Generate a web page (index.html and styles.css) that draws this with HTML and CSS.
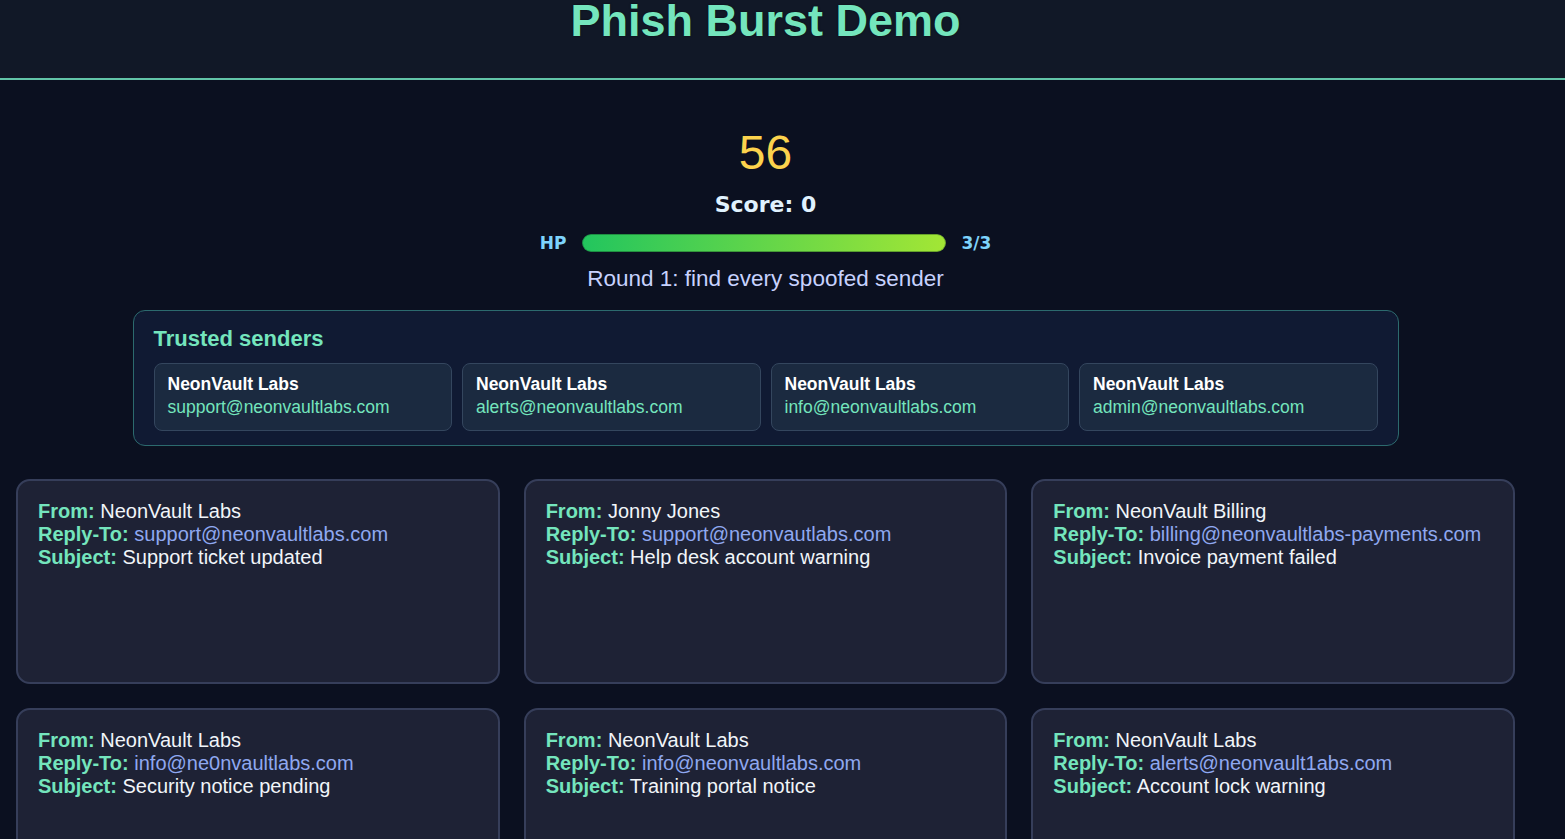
FILE: index.html
```html
<!DOCTYPE html>
<html lang="en">
<head>
  <meta charset="UTF-8">
  <title>Phish Burst Demo</title>
  <link rel="stylesheet" href="styles.css">
</head>
<body>
  <header>
    <h1>Phish Burst Demo</h1>
  </header>

  <main class="container">
    <section class="status">
      <div class="timer">56</div>
      <div class="score">Score: 0</div>
      <div class="hp-row">
        <span class="hp-label">HP</span>
        <div class="hp-bar"><div class="hp-fill" style="width: 100%;"></div></div>
        <span class="hp-count">3/3</span>
      </div>
      <p class="round">Round 1: find every spoofed sender</p>
    </section>

    <section class="trusted">
      <h2>Trusted senders</h2>
      <div class="trusted-list">
        <div class="sender">
          <div class="sender-name">NeonVault Labs</div>
          <div class="sender-mail">support@neonvaultlabs.com</div>
        </div>
        <div class="sender">
          <div class="sender-name">NeonVault Labs</div>
          <div class="sender-mail">alerts@neonvaultlabs.com</div>
        </div>
        <div class="sender">
          <div class="sender-name">NeonVault Labs</div>
          <div class="sender-mail">info@neonvaultlabs.com</div>
        </div>
        <div class="sender">
          <div class="sender-name">NeonVault Labs</div>
          <div class="sender-mail">admin@neonvaultlabs.com</div>
        </div>
      </div>
    </section>

    <section class="inbox">
      <div class="mail">
        <div><b>From:</b> NeonVault Labs</div>
        <div><b>Reply-To:</b> <span class="addr">support@neonvaultlabs.com</span></div>
        <div><b>Subject:</b> Support ticket updated</div>
      </div>
      <div class="mail">
        <div><b>From:</b> Jonny Jones</div>
        <div><b>Reply-To:</b> <span class="addr">support@neonvautlabs.com</span></div>
        <div><b>Subject:</b> Help desk account warning</div>
      </div>
      <div class="mail">
        <div><b>From:</b> NeonVault Billing</div>
        <div><b>Reply-To:</b> <span class="addr">billing@neonvaultlabs-payments.com</span></div>
        <div><b>Subject:</b> Invoice payment failed</div>
      </div>
      <div class="mail">
        <div><b>From:</b> NeonVault Labs</div>
        <div><b>Reply-To:</b> <span class="addr">info@ne0nvaultlabs.com</span></div>
        <div><b>Subject:</b> Security notice pending</div>
      </div>
      <div class="mail">
        <div><b>From:</b> NeonVault Labs</div>
        <div><b>Reply-To:</b> <span class="addr">info@neonvaultlabs.com</span></div>
        <div><b>Subject:</b> Training portal notice</div>
      </div>
      <div class="mail">
        <div><b>From:</b> NeonVault Labs</div>
        <div><b>Reply-To:</b> <span class="addr">alerts@neonvault1abs.com</span></div>
        <div><b>Subject:</b> Account lock warning</div>
      </div>
    </section>
  </main>
</body>
</html>
```

FILE: styles.css
```css
:root {
  --mint: #74e5bd;
  --bg: #0b1020;
  --header-bg: #111827;
  --text: #e5e7eb;
}
body {
  margin: 0;
  font-family: "Liberation Sans", Arial, sans-serif;
  background: var(--background, var(--bg));
  color: var(--text);
}
header {
  background: var(--header-bg);
  height: 78px;
  border-bottom: 2px solid #62c4a8;
  overflow: hidden;
}
header h1 {
  margin: 0;
  width: 1531px;
  text-align: center;
  font-size: 45px;
  line-height: 42px;
  color: var(--mint);
  text-shadow: 0 0 2px rgba(0, 0, 0, 0.6);
}
.container {
  width: 1531px;
  box-sizing: border-box;
  padding: 0 16px 40px;
}
.status {
  display: flex;
  flex-direction: column;
  align-items: center;
  padding-top: 45px;
}
.timer {
  font-size: 48px;
  color: #fcd34d;
}
.score {
  margin-top: 12px;
  font-family: "DejaVu Sans", sans-serif;
  font-weight: bold;
  font-size: 22px;
  color: #e0f2fe;
}
.hp-row {
  display: flex;
  align-items: center;
  margin-top: 16px;
  font-family: "DejaVu Sans", sans-serif;
  font-weight: bold;
  font-size: 17px;
  color: #7dd3fc;
}
.hp-bar {
  width: 364px;
  height: 18px;
  margin: 0 15px 0 16px;
  border-radius: 9px;
  background: #1f2937;
  overflow: hidden;
}
.hp-fill {
  height: 100%;
  border-radius: 9px;
  background: linear-gradient(90deg, #22c55e, #a3e635);
  box-shadow: inset 0 0 0 1px rgba(10, 40, 20, 0.35);
}
.round {
  margin: 13px 0 0;
  font-size: 22.5px;
  color: #c7d2fe;
}
.trusted {
  width: 1266px;
  box-sizing: border-box;
  margin: 18px auto 0;
  padding: 15px 20px 14px;
  background: #101a33;
  border: 1px solid #2c6a6e;
  border-radius: 12px;
}
.trusted h2 {
  margin: 0 0 11px;
  font-size: 22px;
  color: var(--mint);
}
.trusted-list {
  display: grid;
  grid-template-columns: repeat(4, 1fr);
  gap: 10px;
}
.sender {
  padding: 9px 13px 11px;
  background: #1b2a40;
  border: 1px solid #34465e;
  border-radius: 8px;
  font-size: 17.5px;
  line-height: 23px;
}
.sender-name {
  font-weight: bold;
  color: #fff;
}
.sender-mail {
  color: var(--mint);
}
.inbox {
  display: grid;
  grid-template-columns: repeat(3, 1fr);
  gap: 24px;
  margin-top: 33px;
}
.mail {
  height: 205px;
  box-sizing: border-box;
  padding: 19px 20px;
  background: #1e2235;
  border: 2px solid #363e5a;
  border-radius: 14px;
  font-size: 20px;
  line-height: 23px;
  color: #f1f5f9;
}
.mail b {
  color: var(--mint);
}
.mail .addr {
  color: #8fa8f0;
}
```
